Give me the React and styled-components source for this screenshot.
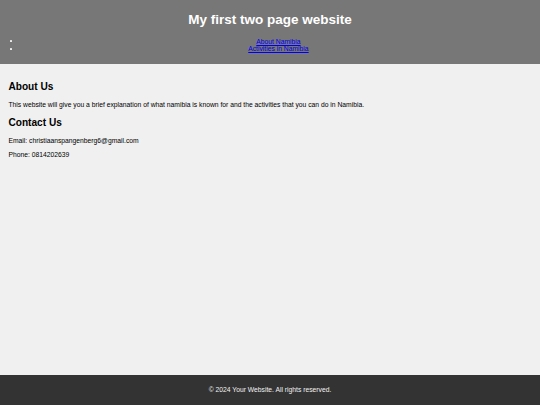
import React from "react";
import styled, { createGlobalStyle } from "styled-components";

const Global = createGlobalStyle`
  html, body {
    margin: 0;
    padding: 0;
  }
  body {
    background: #f0f0f0;
    font-family: "Liberation Sans", Arial, sans-serif;
    font-size: 6.75px;
    line-height: 7.76px;
    color: #000;
  }
`;

const Page = styled.div`
  display: flex;
  flex-direction: column;
  min-height: 100vh;
`;

const Header = styled.header`
  background: #777777;
  color: #fff;
  text-align: center;
  padding: 3.2px 0 4px;
`;

const Title = styled.h1`
  font-size: 13.5px;
  line-height: 15.5px;
  font-weight: bold;
  margin: 9px 0 10px;
`;

const NavList = styled.ul`
  margin: 6.75px 0;
  padding-left: 16.875px;
  list-style: none;
`;

const NavItem = styled.li`
  position: relative;
  text-align: center;

  &::before {
    content: "";
    position: absolute;
    left: -6.6px;
    top: 2.7px;
    width: 2px;
    height: 2px;
    border-radius: 0.4px;
    background: #f4f4f4;
  }
`;

const NavLink = styled.a`
  color: #0000ee;
  text-decoration: underline;
`;

const Main = styled.main`
  flex: 1;
  padding: 8.44px;
`;

const SectionTitle = styled.h2`
  font-size: 10.125px;
  line-height: 11.6px;
  font-weight: bold;
  margin: 8.4px 0;
`;

const Text = styled.p`
  margin: 6.75px 0;
`;

const Footer = styled.footer`
  background: #333333;
  color: #f2f2f2;
  text-align: center;
  height: 30px;
  display: flex;
  align-items: center;
  justify-content: center;
`;

export default function App() {
  return (
    <>
      <Global />
      <Page>
        <Header>
          <Title>My first two page website</Title>
          <nav>
            <NavList>
              <NavItem>
                <NavLink href="#about">About Namibia</NavLink>
              </NavItem>
              <NavItem>
                <NavLink href="#activities">Activities in Namibia</NavLink>
              </NavItem>
            </NavList>
          </nav>
        </Header>
        <Main>
          <section>
            <SectionTitle>About Us</SectionTitle>
            <Text>
              This website will give you a brief explanation of what namibia is
              known for and the activities that you can do in Namibia.
            </Text>
          </section>
          <section>
            <SectionTitle>Contact Us</SectionTitle>
            <Text>Email: christiaanspangenberg6@gmail.com</Text>
            <Text>Phone: 0814202639</Text>
          </section>
        </Main>
        <Footer>© 2024 Your Website. All rights reserved.</Footer>
      </Page>
    </>
  );
}
